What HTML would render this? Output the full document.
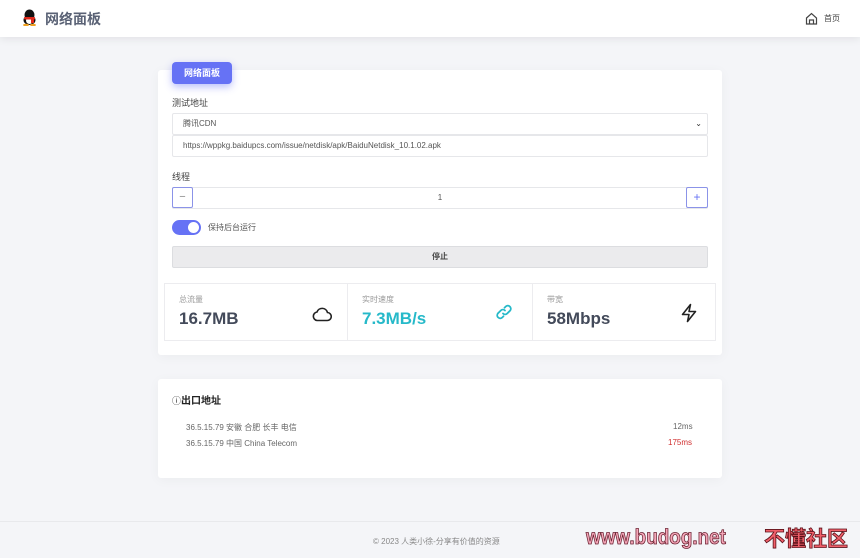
<!DOCTYPE html>
<html><head><meta charset="utf-8"><style>
*{box-sizing:border-box;margin:0;padding:0}
body{width:860px;height:558px;background:#f4f5f8;font-family:"Liberation Sans","Noto Sans CJK SC",sans-serif;color:#333;position:relative;overflow:hidden}
.hdr{position:absolute;left:0;top:0;width:860px;height:37px;background:#fff;box-shadow:0 2px 8px rgba(0,0,0,.08)}
.abs{position:absolute}
.card{position:absolute;background:#fff;border-radius:3px;box-shadow:0 2px 12px rgba(0,0,0,.04)}
.inp{position:absolute;left:172px;width:536px;height:22px;border:1px solid #e6e7ea;border-radius:2px;background:#fff;font-size:8px;color:#555;padding-left:10px;line-height:20px}
.lbl{position:absolute;font-size:9px;color:#444}
.stat{position:absolute;top:283px;height:58px;border:1px solid #ececef;background:#fff}
.stat .t{position:absolute;left:14px;top:10px;font-size:8px;color:#999}
.stat .v{position:absolute;left:14px;top:25px;font-size:17px;font-weight:bold;color:#434a5a}
</style></head><body>
<div class="hdr">
 <svg class="abs" style="left:22px;top:9px" width="15" height="17" viewBox="0 0 15 17"><ellipse cx="7.5" cy="6" rx="5" ry="5.5" fill="#111"/><ellipse cx="7.5" cy="11" rx="6" ry="5" fill="#111"/><ellipse cx="7.5" cy="11.5" rx="3.5" ry="3.5" fill="#fff"/><rect x="2" y="8" width="11" height="2.5" rx="1" fill="#e0281b"/><rect x="9" y="9" width="3" height="5" fill="#e0281b"/><ellipse cx="4" cy="16" rx="3" ry="1.2" fill="#f0a020"/><ellipse cx="11" cy="16" rx="3" ry="1.2" fill="#f0a020"/></svg>
 <div class="abs" style="left:45px;top:9px;font-size:14px;font-weight:bold;color:#5a6275">网络面板</div>
 <svg class="abs" style="left:805px;top:12px" width="13" height="13" viewBox="0 0 13 13" fill="none" stroke="#444" stroke-width="1.2"><path d="M1.5 6 6.5 1.5 11.5 6V12H1.5Z"/><path d="M4.5 12V8h4v4"/></svg>
 <div class="abs" style="left:824px;top:13px;font-size:8px;color:#444">首页</div>
</div>

<div class="card" style="left:158px;top:70px;width:564px;height:285px"></div>
<div class="abs" style="left:172px;top:62px;width:60px;height:22px;background:#6672f5;border-radius:4px;color:#fff;font-size:9px;font-weight:bold;text-align:center;line-height:22px;box-shadow:0 3px 8px rgba(102,114,245,.45)">网络面板</div>
<div class="lbl" style="left:172px;top:96px">测试地址</div>
<div class="inp" style="top:113px">腾讯CDN<span style="position:absolute;right:5px;top:0;font-size:8px;color:#333">⌄</span></div>
<div class="inp" style="top:135px">https://wppkg.baidupcs.com/issue/netdisk/apk/BaiduNetdisk_10.1.02.apk</div>
<div class="lbl" style="left:172px;top:170px">线程</div>
<div class="inp" style="top:187px;padding:0;text-align:center;font-size:8px">1</div>
<div class="abs" style="left:172px;top:187px;width:21px;height:21px;border:1px solid #8b93e8;border-radius:2px;background:#fff;text-align:center;line-height:19px;color:#888;font-size:11px">−</div>
<div class="abs" style="left:686px;top:187px;width:22px;height:21px;border:1px solid #8b93e8;border-radius:2px;background:#fff;text-align:center;line-height:19px;color:#6672f5;font-size:12px">+</div>
<div class="abs" style="left:172px;top:220px;width:29px;height:15px;background:#6672f5;border-radius:8px"><div style="position:absolute;right:2px;top:2px;width:11px;height:11px;border-radius:50%;background:#fff"></div></div>
<div class="lbl" style="left:208px;top:222px;font-size:8px;color:#555">保持后台运行</div>
<div class="abs" style="left:172px;top:246px;width:536px;height:22px;background:#ebebed;border:1px solid #dcdde0;border-radius:2px;text-align:center;line-height:20px;font-size:8px;font-weight:bold;color:#444">停止</div>

<div class="stat" style="left:164px;width:184px"><div class="t">总流量</div><div class="v">16.7MB</div>
<svg class="abs" style="left:147px;top:22px" width="20" height="16" viewBox="0 0 20 16" fill="none" stroke="#222" stroke-width="1.6"><path d="M5 14.5H15a4 4 0 0 0 .5-8A5.5 5.5 0 0 0 5 6 4.3 4.3 0 0 0 5 14.5Z"/></svg></div>
<div class="stat" style="left:347px;width:186px"><div class="t">实时速度</div><div class="v" style="color:#26b9c9">7.3MB/s</div>
<svg class="abs" style="left:147px;top:19px" width="18" height="18" viewBox="0 0 18 18" fill="none" stroke="#26b9c9" stroke-width="1.8" stroke-linecap="round"><path d="M8 10.5a3 3 0 0 0 4.2 0l3-3a3 3 0 0 0-4.2-4.2L9.5 4.8"/><path d="M10 7.5a3 3 0 0 0-4.2 0l-3 3a3 3 0 0 0 4.2 4.2l1.5-1.5"/></svg></div>
<div class="stat" style="left:532px;width:184px"><div class="t">带宽</div><div class="v">58Mbps</div>
<svg class="abs" style="left:147px;top:19px" width="18" height="20" viewBox="0 0 18 20" fill="none" stroke="#222" stroke-width="1.6" stroke-linejoin="round"><path d="M10.5 1.5 2.5 11.5H9L7.5 18.5l8-10H9Z"/></svg></div>

<div class="card" style="left:158px;top:379px;width:564px;height:99px"></div>
<div class="abs" style="left:172px;top:392px;font-size:10px;font-weight:bold;color:#222"><span style="font-weight:normal;font-size:9px">ⓘ</span>出口地址</div>
<div class="abs" style="left:186px;top:422px;font-size:8px;color:#666">36.5.15.79 安徽 合肥 长丰 电信</div>
<div class="abs" style="left:186px;top:438px;font-size:8px;color:#666">36.5.15.79 中国 China Telecom</div>
<div class="abs" style="left:673px;top:422px;font-size:8px;color:#666">12ms</div>
<div class="abs" style="left:668px;top:438px;font-size:8px;color:#d03030">175ms</div>

<div class="abs" style="left:0;top:521px;width:860px;height:1px;background:#e8e9ec"></div>
<div class="abs" style="left:373px;top:536px;font-size:8px;color:#888">© 2023 人类小徐-分享有价值的资源</div>
<div class="abs" style="left:586px;top:526px;font-size:21px;font-weight:bold;color:#f4a6b8;-webkit-text-stroke:0.8px #6a2030;font-family:'Liberation Sans',sans-serif;line-height:24px;transform-origin:0 0;transform:scaleX(0.9);white-space:nowrap">www.budog.net</div>
<div class="abs" style="left:764px;top:526px;font-size:21px;font-weight:bold;color:#f0606a;-webkit-text-stroke:0.8px #5a1018;font-family:'Noto Sans CJK SC',sans-serif;line-height:24px;white-space:nowrap">不懂社区</div>
</body></html>
